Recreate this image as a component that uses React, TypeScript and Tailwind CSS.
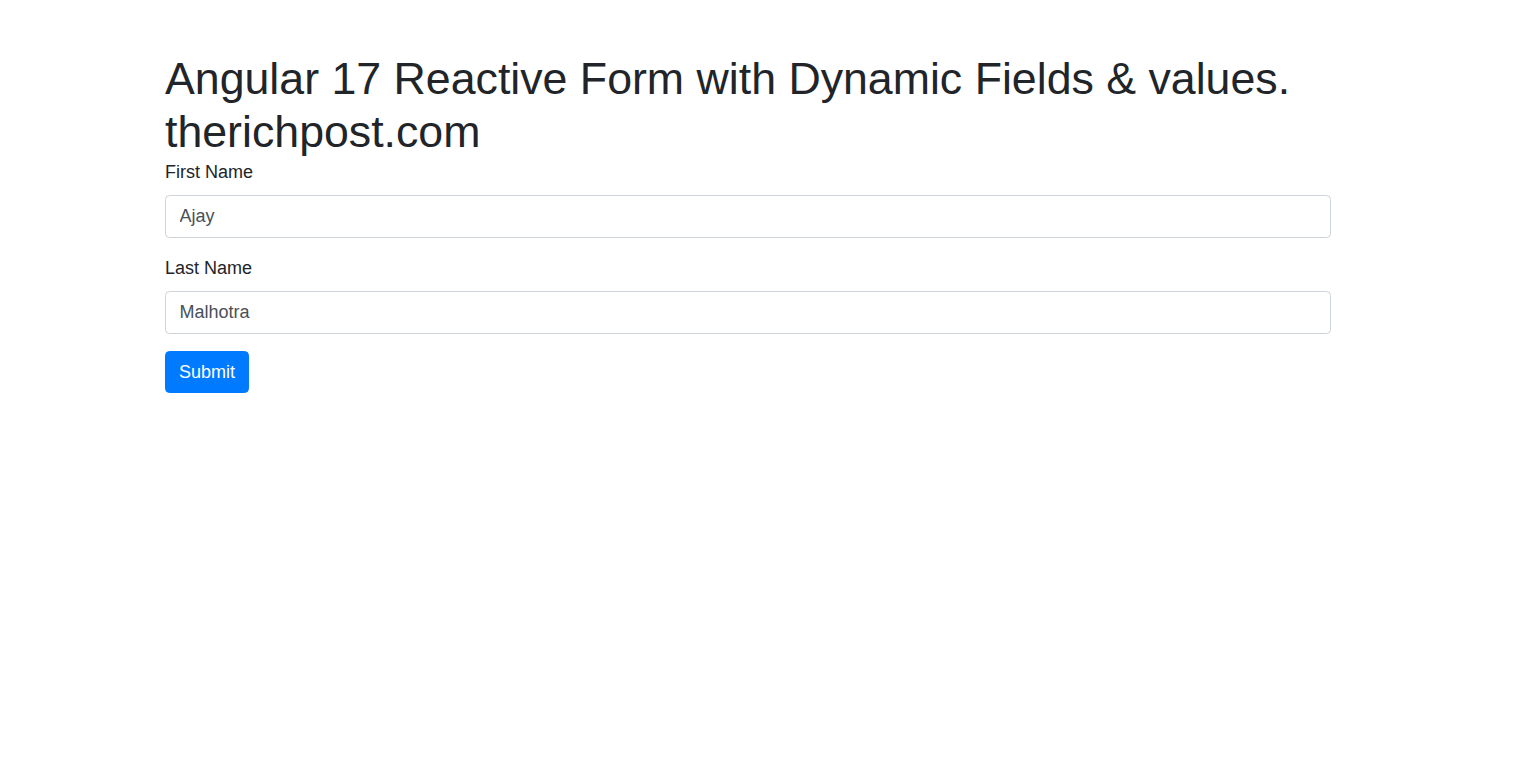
import React from "react";

export default function App() {
  return (
    <div className="min-h-screen bg-white text-[#212529]" style={{ fontFamily: '"Liberation Sans", Arial, sans-serif' }}>
      <div className="ml-[165px] w-[1166px] pt-[52px]">
        <h1 className="text-[44.7px] leading-[53px] font-normal m-0">
          Angular 17 Reactive Form with Dynamic Fields &amp; values. therichpost.com
        </h1>
        <form className="mt-[1px]" onSubmit={(e) => e.preventDefault()}>
          <div className="mb-[17px]">
            <label className="block text-[18px] leading-[27px] mb-[9px]">First Name</label>
            <input
              defaultValue="Ajay"
              className="block w-full h-[43px] px-[13.5px] text-[18px] text-[#495057] border border-[#ced4da] rounded-[4.5px] outline-none bg-white"
            />
          </div>
          <div className="mb-[17px]">
            <label className="block text-[18px] leading-[27px] mb-[9px]">Last Name</label>
            <input
              defaultValue="Malhotra"
              className="block w-full h-[43px] px-[13.5px] text-[18px] text-[#495057] border border-[#ced4da] rounded-[4.5px] outline-none bg-white"
            />
          </div>
          <button
            type="submit"
            className="h-[42px] w-[84px] bg-[#007bff] text-white text-[18px] leading-[27px] rounded-[4.5px] border border-[#007bff]"
          >
            Submit
          </button>
        </form>
      </div>
    </div>
  );
}
